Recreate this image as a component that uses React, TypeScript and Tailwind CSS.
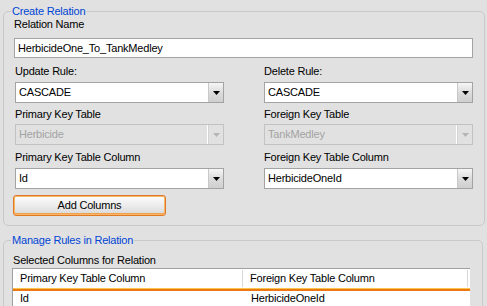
import { ReactNode } from "react";

function Label({ children, className = "" }: { children: ReactNode; className?: string }) {
  return <div className={`leading-[13px] ${className}`}>{children}</div>;
}

function Combo({ value, disabled = false, className = "" }: { value: string; disabled?: boolean; className?: string }) {
  return (
    <div
      className={`flex h-[21px] border ${
        disabled ? "border-[#c2c2c2] bg-[#e1e1e1]" : "border-[#a3a3a3] bg-white"
      } ${className}`}
    >
      <div className={`flex flex-1 items-center pl-[3px] ${disabled ? "text-[#a3a3a3] border-r border-white" : ""}`}>
        {value}
      </div>
      <div
        className={`flex w-[15px] items-center justify-center border-l ${
          disabled ? "border-[#d4d4d4] bg-[#e1e1e1]" : "border-[#c9c9c9] bg-gradient-to-b from-[#f6f6f6] via-[#dcdcdc] to-[#cfcfcf]"
        }`}
      >
        <svg width="7" height="4" viewBox="0 0 7 4">
          <path d="M0 0h7L3.5 4z" fill={disabled ? "#b5b5b5" : "#000"} />
        </svg>
      </div>
    </div>
  );
}

function Group({ title, children, className = "" }: { title: string; children: ReactNode; className?: string }) {
  return (
    <fieldset className={`rounded-[5px] border border-[#c9c9c9] ${className}`}>
      <legend className="ml-[7px] px-[1px] leading-[13px] text-[#0046d5]">{title}</legend>
      {children}
    </fieldset>
  );
}

export default function App() {
  return (
    <div className="h-[306px] w-[487px] overflow-hidden bg-[#e1e1e1] font-['Liberation_Sans',Arial,sans-serif] text-[11px] tracking-[-0.2px] text-black">
      <div className="pl-[3px] pr-[4px] pt-[5px]">
        <Group title="Create Relation">
          <div className="pl-[10px] pr-[11px] pb-[9px]">
            <Label>Relation Name</Label>
            <div className="mt-[7px] flex h-[20px] items-center border border-[#a3a3a3] bg-white pl-[3px]">
              HerbicideOne_To_TankMedley
            </div>
            <div className="grid grid-cols-[209px_209px] gap-x-[40px] pl-[1px]">
              <Label className="mt-[7px]">Update Rule:</Label>
              <Label className="mt-[7px]">Delete Rule:</Label>
              <Combo value="CASCADE" className="mt-[4px]" />
              <Combo value="CASCADE" className="mt-[4px]" />
              <Label className="mt-[5px]">Primary Key Table</Label>
              <Label className="mt-[5px]">Foreign Key Table</Label>
              <Combo value="Herbicide" disabled className="mt-[3px]" />
              <Combo value="TankMedley" disabled className="mt-[3px]" />
              <Label className="mt-[6px]">Primary Key Table Column</Label>
              <Label className="mt-[6px]">Foreign Key Table Column</Label>
              <Combo value="Id" className="mt-[4px]" />
              <Combo value="HerbicideOneId" className="mt-[4px]" />
            </div>
            <button className="mt-[6px] ml-[-1px] flex h-[21px] w-[153px] items-center justify-center rounded-[3px] border border-[#e0782a] bg-gradient-to-b from-[#fdfdfd] via-[#ececec] to-[#d8d8d8] shadow-[inset_0_0_0_1px_#f9b766,inset_0_-1px_0_1px_#f0a04a]">
              Add Columns
            </button>
          </div>
        </Group>
        <Group title="Manage Rules in Relation" className="mt-[8px]">
          <div className="pl-[8px] pr-[12px]">
            <Label className="mt-[7px] pl-[1px]">Selected Columns for Relation</Label>
            <div className="mt-[1px] h-[60px] border-l border-t border-[#a0a0a0] bg-white">
              <div className="flex h-[19px] items-end pb-[1px]">
                <div className="flex h-[17px] w-[230px] items-center border-r border-[#d8d8d8] pl-[7px]">
                  Primary Key Table Column
                </div>
                <div className="flex h-[17px] w-[225px] items-center border-r border-[#d8d8d8] pl-[7px]">
                  Foreign Key Table Column
                </div>
              </div>
              <div className="h-[1px] bg-[#fcc24c]" />
              <div className="h-[2px] bg-[#ec7a12]" />
              <div className="flex leading-[13px]">
                <div className="w-[230px] pl-[7px] pt-[1px]">Id</div>
                <div className="pl-[8px] pt-[1px]">HerbicideOneId</div>
              </div>
            </div>
          </div>
        </Group>
      </div>
    </div>
  );
}
